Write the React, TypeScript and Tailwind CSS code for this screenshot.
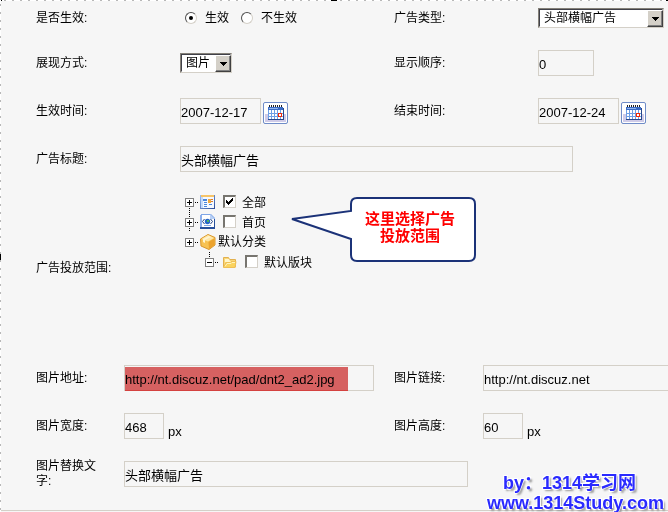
import React from "react";

const FIELD =
  "h-[26px] min-w-0 rounded-none border border-[#d4d0c8] bg-transparent p-0 text-[13px] leading-5 text-black outline-none";

function Label({ htmlFor, children }: { htmlFor?: string; children: React.ReactNode }) {
  return (
    <label htmlFor={htmlFor} className="block max-w-[62px] leading-[15px]">
      {children}
    </label>
  );
}

function ClassicSelect({ id, options, className }: { id: string; options: string[]; className: string }) {
  return (
    <div
      className={
        "relative h-5 border border-t-[#848078] border-r-[#d4d0c8] border-b-[#d4d0c8] border-l-[#848078] bg-white " +
        className
      }
    >
      <select
        id={id}
        className="block h-[18px] w-full appearance-none rounded-none border border-t-[#404048] border-r-white border-b-white border-l-[#404048] bg-transparent pr-4 pl-1 text-[12px] leading-4 outline-none"
      >
        {options.map((o) => (
          <option key={o}>{o}</option>
        ))}
      </select>
      <span className="pointer-events-none absolute top-px right-0 flex h-[17px] w-4 items-center justify-center border border-t-white border-r-[#404040] border-b-[#404040] border-l-white bg-[#d4d0c8] shadow-[inset_-1px_-1px_0_#808080]">
        <svg width="7" height="4" viewBox="0 0 7 4" shapeRendering="crispEdges">
          <path d="M0 0h7v1H6v1H5v1H4v1H3V3H2V2H1V1H0z" />
        </svg>
      </span>
    </div>
  );
}

function Radio({ label, checked }: { label: string; checked?: boolean }) {
  return (
    <label className="flex items-center gap-2">
      <span className="relative flex size-3 items-center justify-center">
        <input
          type="radio"
          name="enabled"
          defaultChecked={checked}
          className="peer size-3 appearance-none rounded-full border border-t-[#505050] border-r-[#d4d0c8] border-b-[#d4d0c8] border-l-[#505050] bg-white"
        />
        <span className="pointer-events-none absolute size-1 rounded-full bg-black opacity-0 peer-checked:opacity-100" />
      </span>
      {label}
    </label>
  );
}

function CalendarButton({ label }: { label: string }) {
  return (
    <button
      type="button"
      aria-label={label}
      className="mt-1 flex h-[22px] w-[25px] items-center justify-center rounded-[2px] border border-[#6f8cc8] bg-[linear-gradient(#fff_55%,#cfcbe8_55%)] shadow-[inset_0_0_0_1px_#fff]"
    >
      <svg width="16" height="16" viewBox="0 0 16 16" shapeRendering="crispEdges">
        <path fill="#fff" d="M0 2h15v13H0z" />
        <path fill="#3a6cc6" d="M0 2h15v3H0z" />
        <path fill="#8fb4ee" d="M1 3h9v1H1z" />
        <path stroke="#222" strokeDasharray="1 1" d="M1 .5h14M1 1.5h14" />
        <path stroke="#6d9fe4" d="M.5 5v10M3.5 5v10M6.5 5v10M9.5 5v10M12.5 5v10M0 8.5h15M0 11.5h15" />
        <path stroke="#27468a" d="M0 14.5h15.5M15.5 3v12" />
        <path fill="#fff" stroke="#ee2c0c" d="M10.500 8.500h3v3h-3z" />
      </svg>
    </button>
  );
}

function DateField({ id, value, buttonLabel }: { id: string; value: string; buttonLabel: string }) {
  return (
    <div className="flex items-center gap-0.5">
      <input id={id} defaultValue={value} className={FIELD + " w-[81px] pt-0.5"} />
      <CalendarButton label={buttonLabel} />
    </div>
  );
}

function Expander({ open, above, below }: { open?: boolean; above?: boolean; below?: boolean }) {
  return (
    <svg width="20" height="20" viewBox="0 0 20 20" shapeRendering="crispEdges" className="shrink-0">
      <path fill="#fff" stroke="#808080" d="M5.500 6.500h8v8h-8z" />
      <path stroke="#000" d="M7 10.500h5" />
      {!open && <path stroke="#000" d="M9.500 8v5" />}
      <path stroke="#000" strokeDasharray="1 1" d="M15 10.500h4" />
      {above && <path stroke="#000" strokeDasharray="1 1" d="M9.500 0v6" />}
      {below && <path stroke="#000" strokeDasharray="1 1" d="M9.500 16v4" />}
    </svg>
  );
}

function ListIcon() {
  return (
    <svg width="16" height="16" viewBox="0 0 16 16">
      <defs>
        <linearGradient id="frame" x1="0" y1="0" x2="1" y2="1">
          <stop offset="0" stopColor="#9cc0f4" />
          <stop offset="1" stopColor="#2a4a96" />
        </linearGradient>
      </defs>
      <path fill="url(#frame)" d="M0 1h15v14H0z" />
      <path fill="#f4f8ff" d="M1 3h13v11H1z" />
      <path fill="#f6c468" d="M1 1h13v2H1z" />
      <path fill="#c4dafa" d="M1 3h2v11H1z" />
      <path fill="#4a86dc" d="M3 5h4v2H3zM4 8h3v1H4zM4 10h3v1H4zM9 10h3v1H9zM4 12h3v1H4z" />
      <path fill="#f2a83a" d="M8 5h3v4H8z" />
      <path fill="#d87c2c" d="M11 5h2v1h-2zM11 7h2v1h-2z" />
    </svg>
  );
}

function PageIcon() {
  return (
    <svg width="16" height="16" viewBox="0 0 16 16">
      <path fill="#7fa6e6" d="M1 0h10l4 4v11H1z" />
      <path fill="#fff" d="M2 1h8l4 4v8H2z" />
      <path fill="#b8d0f6" d="M10 0v5h5z" />
      <path fill="#27509c" d="M0 13h15v2H0zM14 5h1v9h-1z" />
      <path fill="#8db0ec" d="M0 1h2v12H0z" />
      <circle cx="7.500" cy="7.500" r="2.700" fill="#2566c8" />
      <path fill="#48b05c" d="M7 6h2v2H7z" />
      <path fill="none" stroke="#1e3f80" d="M4.500 5L2.500 7.500l2 2.500M10.500 5l2 2.500-2 2.500" />
      <path fill="#7fa6e6" d="M4 11h7v1H4z" />
    </svg>
  );
}

function BoxIcon() {
  return (
    <svg width="16" height="16" viewBox="0 0 16 16">
      <path fill="#f7c253" stroke="#d9962c" d="M8 .5l7 3V11l-6 4.500L1 12 .5 5z" />
      <path fill="#ffe7a4" d="M8 1l6 3-6 3.500L1.500 5z" />
      <path fill="#eca32e" d="M8.500 8L14.500 4.500V11L9 15z" />
      <path fill="#fff4cf" d="M3 5l6-3 2 1-6 3v3L3 8z" />
    </svg>
  );
}

function FolderIcon() {
  return (
    <svg width="16" height="16" viewBox="0 0 16 16">
      <path fill="#f9d778" stroke="#e2b04e" d="M2.500 13V3.500h5l1 2h6V13z" />
      <path fill="#fff6cc" d="M4 5h4l1 2h5v1H4z" />
      <path fill="#fbd45f" stroke="#efbf56" d="M2.500 13.500L5 8.500h4l1-1h5l-1 6z" />
      <path fill="none" stroke="#fff3bf" d="M4 12.500l2-3h4l1-1h3" />
    </svg>
  );
}

function TreeNode({
  label,
  icon,
  checkable = true,
  checked,
  expander,
  className = "",
}: {
  label: string;
  icon: React.ReactNode;
  checkable?: boolean;
  checked?: boolean;
  expander: React.ReactNode;
  className?: string;
}) {
  return (
    <li className={"flex h-5 items-center " + className}>
      {expander}
      {icon}
      {checkable ? (
        <label className="flex items-center gap-1.5 pl-[7px]">
          <span className="relative mb-0.5 size-[13px]">
            <input
              type="checkbox"
              defaultChecked={checked}
              className="peer block size-[13px] appearance-none border-t-2 border-r border-b border-l-2 border-t-[#77756f] border-r-[#d4d0c8] border-b-[#d4d0c8] border-l-[#77756f] bg-white"
            />
            <svg
              width="13"
              height="13"
              viewBox="0 0 13 13"
              shapeRendering="crispEdges"
              className="pointer-events-none absolute inset-0 opacity-0 peer-checked:opacity-100"
            >
              <path d="M3 5h1v1h1v1h1V6h1V5h1V4h1V3h1v3H9v1H8v1H7v1H6v1H5V9H4V8H3z" />
            </svg>
          </span>
          <span className="pt-0.5">{label}</span>
        </label>
      ) : (
        <span className="pl-0.5">{label}</span>
      )}
    </li>
  );
}

function Callout() {
  return (
    <div className="absolute top-[14px] left-[110px] h-[66px] w-[188px]">
      <svg width="188" height="66" viewBox="0 0 188 66" className="absolute inset-0">
        <path
          fill="#fff"
          stroke="#1b3278"
          strokeWidth="2"
          d="M61 14V7q0-6 6-6h112q6 0 6 6v51q0 6-6 6H67q-6 0-6-6V42L2 22z"
        />
      </svg>
      <p className="absolute top-[13px] left-[60px] w-[120px] text-center text-[15px] leading-[17px] font-bold text-[#f00]">
        这里选择广告
        <br />
        投放范围
      </p>
    </div>
  );
}

export default function App() {
  return (
    <main className="relative w-full overflow-hidden bg-[#f6f6f6] font-['Liberation_Sans','Noto_Sans_CJK_SC',sans-serif] text-[12px] leading-[15px] text-black">
      <div className="h-px bg-[repeating-linear-gradient(90deg,#fff_0_4px,#b8b8b8_4px_6px,#fff_6px_8px)]" />
      <span className="absolute top-0 left-0 h-px w-0.5 bg-black" />
      <span className="absolute top-0 left-1/2 h-px w-1.5 -translate-x-1/2 bg-black" />
      <span className="absolute top-0 right-0 h-px w-0.5 bg-black" />
      <div className="absolute inset-y-0 left-0 w-px bg-[repeating-linear-gradient(#fff_0_4px,#b8b8b8_4px_6px,#fff_6px_8px)]" />
      <span className="absolute top-1/2 left-0 h-1.5 w-px -translate-y-1/2 bg-black" />

      <form className="ml-px border-b border-[#d4d0c8] pb-3 pl-[35px]">
        <div className="grid auto-rows-[48px] grid-cols-[144px_1fr_144px_130px] grid-rows-[38px_48px_48px_48px_170px] items-center">
          <span className="pb-1">是否生效:</span>
          <div className="flex items-center gap-3 pb-1 pl-[5px]" role="radiogroup" aria-label="是否生效">
            <Radio label="生效" checked />
            <Radio label="不生效" />
          </div>
          <div className="pb-1">
            <Label htmlFor="type">广告类型:</Label>
          </div>
          <div className="pb-1">
            <ClassicSelect id="type" options={["头部横幅广告"]} className="w-[126px]" />
          </div>

          <Label htmlFor="mode">展现方式:</Label>
          <ClassicSelect id="mode" options={["图片"]} className="w-[52px]" />
          <Label htmlFor="order">显示顺序:</Label>
          <input id="order" defaultValue="0" className={FIELD + " w-14 pt-0.5"} />

          <Label htmlFor="start">生效时间:</Label>
          <DateField id="start" value="2007-12-17" buttonLabel="选择生效时间" />
          <Label htmlFor="end">结束时间:</Label>
          <DateField id="end" value="2007-12-24" buttonLabel="选择结束时间" />

          <Label htmlFor="title">广告标题:</Label>
          <input id="title" defaultValue="头部横幅广告" className={FIELD + " col-span-3 w-full max-w-[393px]"} />

          <span>广告投放范围:</span>
          <div className="relative col-span-3 self-start pt-[9px]">
            <ul>
              <TreeNode label="全部" icon={<ListIcon />} checked expander={<Expander below />} />
              <TreeNode label="首页" icon={<PageIcon />} expander={<Expander above below />} />
              <TreeNode label="默认分类" icon={<BoxIcon />} checkable={false} expander={<Expander />} />
              <TreeNode
                label="默认版块"
                icon={<FolderIcon />}
                expander={<Expander open above />}
                className="gap-px pl-5"
              />
            </ul>
            <Callout />
          </div>
        </div>

        <div className="grid auto-rows-[48px] grid-cols-[88px_1fr_89px_185px] items-center pt-px">
          <Label htmlFor="src">图片地址:</Label>
          <div className="relative flex w-full max-w-[250px]">
            <input
              id="src"
              defaultValue="http://nt.discuz.net/pad/dnt2_ad2.jpg"
              className={FIELD + " w-full pt-0.5"}
            />
            <span className="pointer-events-none absolute top-0.5 bottom-0 left-px w-[223px] border-b border-[#ff5050] bg-[#de6464] mix-blend-multiply" />
          </div>
          <Label htmlFor="href">图片链接:</Label>
          <input id="href" defaultValue="http://nt.discuz.net" className={FIELD + " w-[250px] pt-0.5"} />

          <Label htmlFor="width">图片宽度:</Label>
          <div className="flex items-end gap-1">
            <input id="width" defaultValue="468" className={FIELD + " w-10 pt-0.5"} />
            <span className="text-[13px]">px</span>
          </div>
          <Label htmlFor="height">图片高度:</Label>
          <div className="flex items-end gap-1">
            <input id="height" defaultValue="60" className={FIELD + " w-10 pt-0.5"} />
            <span className="text-[13px]">px</span>
          </div>

          <Label htmlFor="alt">图片替换文字:</Label>
          <input id="alt" defaultValue="头部横幅广告" className={FIELD + " col-span-3 w-full max-w-[344px]"} />
        </div>
      </form>
      <div className="h-0.5" />

      <p className="absolute right-1 bottom-0 text-center text-[18px] leading-5 font-bold text-[#2a2aff] [text-shadow:-1px_-1px_0_#fff,1px_-1px_0_#fff,-1px_1px_0_#fff,2px_2px_2px_#999]">
        <span className="block pr-3">by：1314学习网</span>
        <a href="#" className="block">
          www.1314Study.com
        </a>
      </p>
    </main>
  );
}
